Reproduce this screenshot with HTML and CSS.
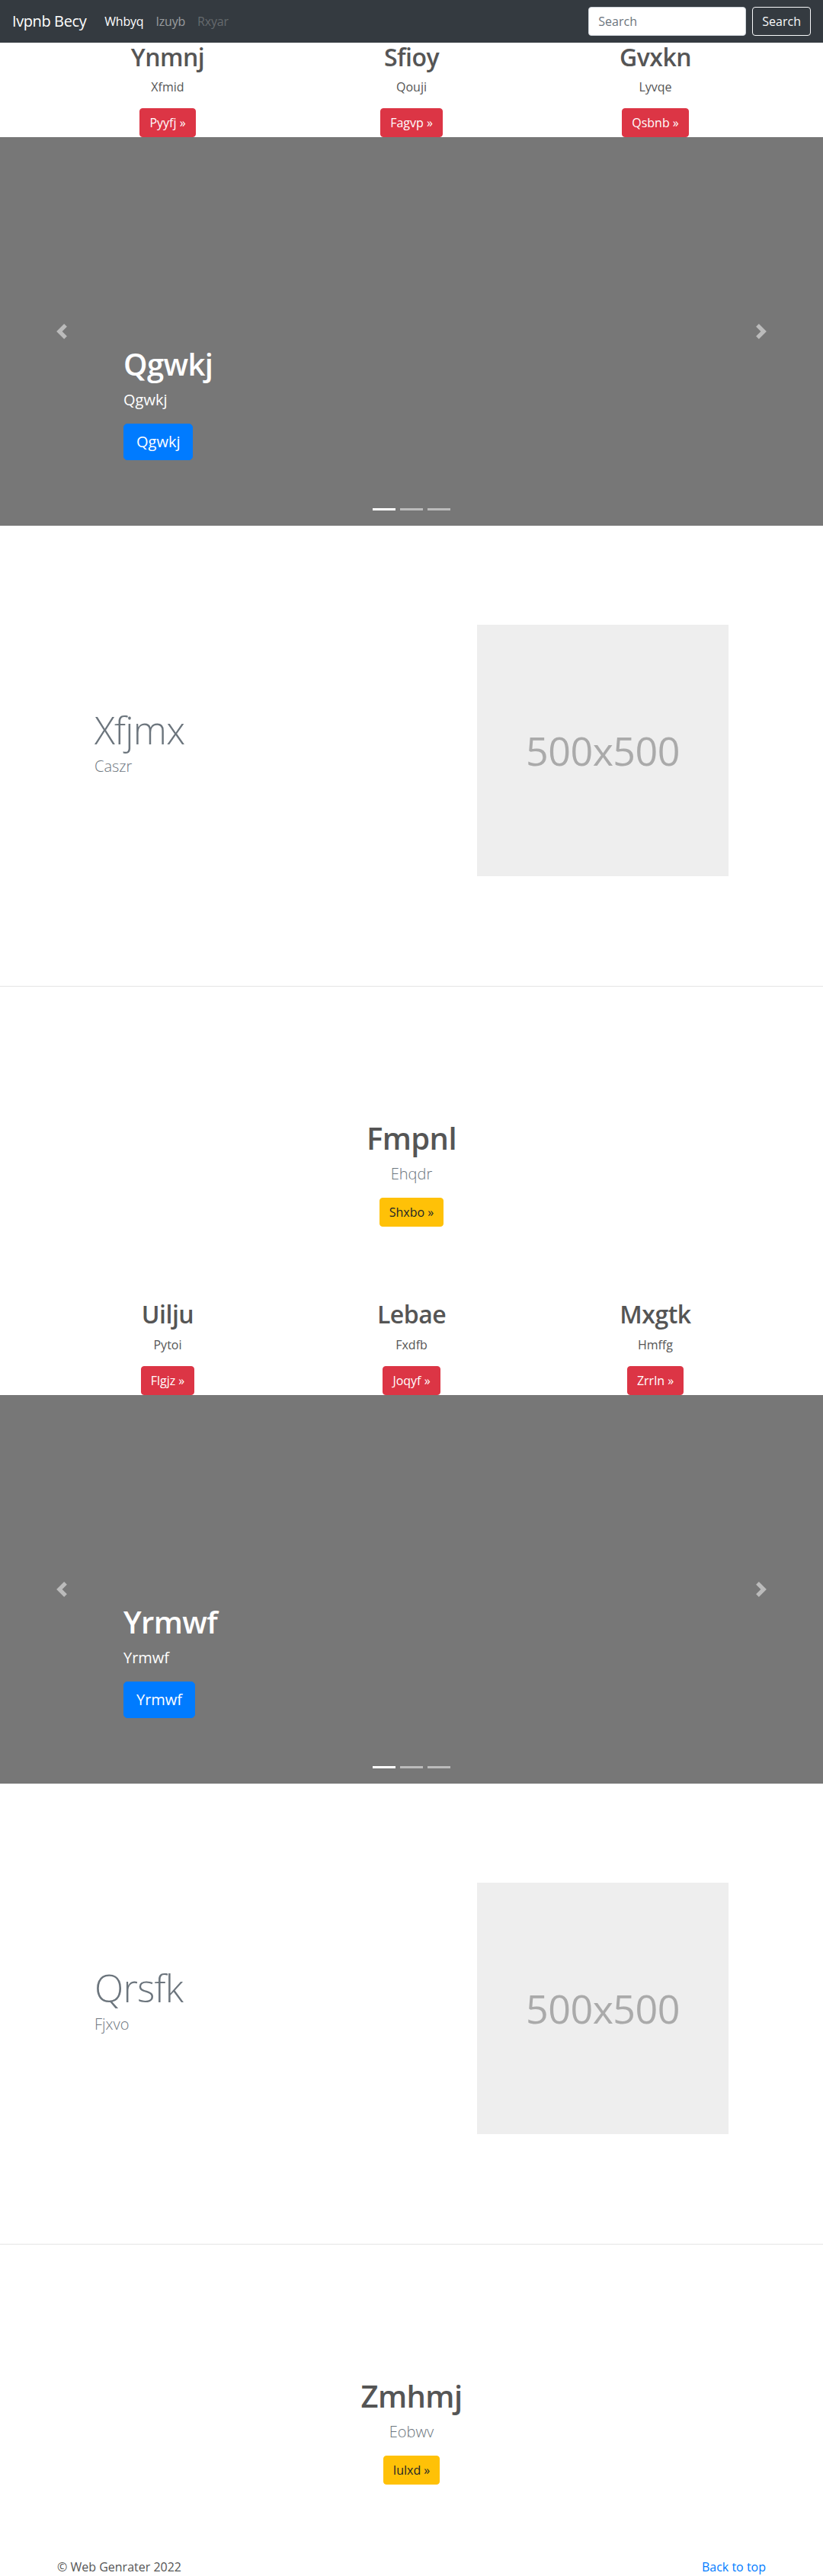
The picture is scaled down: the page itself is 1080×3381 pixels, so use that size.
FILE: index.html
```html
<!DOCTYPE html>
<html lang="en">
<head>
<meta charset="utf-8">
<title>Ivpnb Becy</title>
<link rel="stylesheet" href="styles.css">
</head>
<body>
<nav class="navbar">
  <a class="brand" href="#">Ivpnb Becy</a>
  <ul class="nav-links">
    <li><a class="nav-link active" href="#">Whbyq</a></li>
    <li><a class="nav-link" href="#">Izuyb</a></li>
    <li><a class="nav-link disabled" href="#">Rxyar</a></li>
  </ul>
  <form class="search">
    <input class="search-input" type="text" placeholder="Search">
    <button class="search-btn" type="button">Search</button>
  </form>
</nav>

<main>
  <section class="cols">
    <div class="col"><h2 class="col-title">Ynmnj</h2><p class="col-text">Xfmid</p><a class="btn btn-danger" href="#">Pyyfj &raquo;</a></div>
    <div class="col"><h2 class="col-title">Sfioy</h2><p class="col-text">Qouji</p><a class="btn btn-danger" href="#">Fagvp &raquo;</a></div>
    <div class="col"><h2 class="col-title">Gvxkn</h2><p class="col-text">Lyvqe</p><a class="btn btn-danger" href="#">Qsbnb &raquo;</a></div>
  </section>

  <section class="carousel">
    <div class="caption">
      <h1 class="caption-title">Qgwkj</h1>
      <p class="caption-text">Qgwkj</p>
      <p class="caption-action"><a class="btn btn-primary btn-lg" href="#">Qgwkj</a></p>
    </div>
    <a class="control control-prev" href="#"><svg width="20" height="20" viewBox="0 0 8 8"><path fill="#fff" d="M5.25 0l-4 4 4 4 1.5-1.5L4.25 4l2.5-2.5L5.25 0z"/></svg></a>
    <a class="control control-next" href="#"><svg width="20" height="20" viewBox="0 0 8 8"><path fill="#fff" d="M2.75 0l-1.5 1.5L3.75 4l-2.5 2.5L2.75 8l4-4-4-4z"/></svg></a>
    <ol class="indicators"><li class="active"></li><li></li><li></li></ol>
  </section>

  <section class="featurette">
    <div class="feat-text">
      <h2 class="feat-title">Xfjmx</h2>
      <p class="feat-lead">Caszr</p>
    </div>
    <div class="placeholder">500x500</div>
  </section>

  <hr class="divider">

  <section class="promo">
    <h1 class="promo-title">Fmpnl</h1>
    <p class="promo-lead">Ehqdr</p>
    <a class="btn btn-warning" href="#">Shxbo &raquo;</a>
  </section>

  <section class="cols">
    <div class="col"><h2 class="col-title">Uilju</h2><p class="col-text">Pytoi</p><a class="btn btn-danger" href="#">Flgjz &raquo;</a></div>
    <div class="col"><h2 class="col-title">Lebae</h2><p class="col-text">Fxdfb</p><a class="btn btn-danger" href="#">Joqyf &raquo;</a></div>
    <div class="col"><h2 class="col-title">Mxgtk</h2><p class="col-text">Hmffg</p><a class="btn btn-danger" href="#">Zrrln &raquo;</a></div>
  </section>

  <section class="carousel">
    <div class="caption">
      <h1 class="caption-title">Yrmwf</h1>
      <p class="caption-text">Yrmwf</p>
      <p class="caption-action"><a class="btn btn-primary btn-lg" href="#">Yrmwf</a></p>
    </div>
    <a class="control control-prev" href="#"><svg width="20" height="20" viewBox="0 0 8 8"><path fill="#fff" d="M5.25 0l-4 4 4 4 1.5-1.5L4.25 4l2.5-2.5L5.25 0z"/></svg></a>
    <a class="control control-next" href="#"><svg width="20" height="20" viewBox="0 0 8 8"><path fill="#fff" d="M2.75 0l-1.5 1.5L3.75 4l-2.5 2.5L2.75 8l4-4-4-4z"/></svg></a>
    <ol class="indicators"><li class="active"></li><li></li><li></li></ol>
  </section>

  <section class="featurette">
    <div class="feat-text">
      <h2 class="feat-title">Qrsfk</h2>
      <p class="feat-lead">Fjxvo</p>
    </div>
    <div class="placeholder">500x500</div>
  </section>

  <hr class="divider">

  <section class="promo">
    <h1 class="promo-title">Zmhmj</h1>
    <p class="promo-lead">Eobwv</p>
    <a class="btn btn-warning" href="#">Iulxd &raquo;</a>
  </section>
</main>

<footer class="footer">
  <p class="copy">&copy; Web Genrater 2022</p>
  <a class="back" href="#">Back to top</a>
</footer>
</body>
</html>
```

FILE: styles.css
```css
* { box-sizing: border-box; }

body {
  margin: 0;
  font-family: "Open Sans", "Noto Sans", sans-serif;
  font-size: 16px;
  line-height: 1.5;
  color: #555;
  background: #fff;
}

h1, h2, p { margin: 0; }
a { text-decoration: none; }

/* navbar */
.navbar {
  display: flex;
  align-items: center;
  height: 56px;
  padding: 8px 16px;
  background: #343a40;
}
.brand {
  color: #fff;
  font-size: 20px;
  line-height: 30px;
  padding: 5px 0;
  margin-right: 16px;
  letter-spacing: -0.4px;
}
.nav-links {
  display: flex;
  list-style: none;
  margin: 0;
  padding: 0;
}
.nav-link {
  display: block;
  padding: 8px;
  color: rgba(255, 255, 255, .5);
  letter-spacing: -0.2px;
}
.nav-link.active { color: #fff; }
.nav-link.disabled { color: rgba(255, 255, 255, .25); }
.search {
  margin: 0 0 0 auto;
  display: flex;
  gap: 8px;
}
.search-input {
  width: 207px;
  height: 38px;
  padding: 6px 12px;
  font: inherit;
  color: #495057;
  background: #fff;
  border: 1px solid #ced4da;
  border-radius: 4px;
}
.search-input::placeholder { color: #6c757d; }
.search-btn {
  height: 38px;
  padding: 6px 12px;
  font: inherit;
  color: #f8f9fa;
  background: transparent;
  border: 1px solid #f8f9fa;
  border-radius: 4px;
}

/* buttons */
.btn {
  display: inline-block;
  padding: 6px 12px;
  font-size: 16px;
  line-height: 24px;
  border: 1px solid transparent;
  border-radius: 4px;
}
.btn-danger { color: #fff; background: #dc3545; border-color: #dc3545; }
.btn-primary { color: #fff; background: #007bff; border-color: #007bff; }
.btn-warning { color: #212529; background: #ffc107; border-color: #ffc107; }
.btn-lg {
  padding: 8px 16px;
  font-size: 20px;
  line-height: 30px;
  border-radius: 5px;
}

/* three columns */
.cols {
  width: 960px;
  margin: 0 auto;
  display: grid;
  grid-template-columns: repeat(3, 1fr);
  text-align: center;
}
.col-title {
  font-size: 32px;
  font-weight: 600;
  line-height: 1.2;
  letter-spacing: -0.5px;
  margin-bottom: 8px;
}
.col-text { margin-bottom: 16px; }

/* carousel */
.carousel {
  position: relative;
  height: 510px;
  background: #777;
}
.caption {
  position: absolute;
  left: 15%;
  right: 15%;
  bottom: 50px;
  padding: 20px 0;
  color: #fff;
  z-index: 10;
}
.caption-title {
  font-size: 40px;
  font-weight: 600;
  line-height: 48px;
  letter-spacing: -0.6px;
  margin-bottom: 8px;
}
.caption-text {
  font-size: 20px;
  line-height: 30px;
  margin-bottom: 16px;
}
.caption-action { margin-bottom: 16px; }
.control {
  position: absolute;
  top: 0;
  bottom: 0;
  width: 15%;
  display: flex;
  align-items: center;
  justify-content: center;
  opacity: .5;
}
.control svg { display: block; }
.control-prev { left: 0; }
.control-next { right: 0; }
.indicators {
  position: absolute;
  left: 0;
  right: 0;
  bottom: 10px;
  display: flex;
  justify-content: center;
  list-style: none;
  margin: 0;
  padding: 0;
}
.indicators li {
  width: 30px;
  height: 23px;
  margin: 0 3px;
  border-top: 10px solid transparent;
  border-bottom: 10px solid transparent;
  background: #fff;
  background-clip: padding-box;
  opacity: .5;
}
.indicators li.active { opacity: 1; }

/* featurette */
.featurette {
  width: 960px;
  margin: 0 auto;
  padding: 130px 64px 144px;
  display: flex;
  align-items: center;
  justify-content: space-between;
}
.feat-title {
  font-size: 50px;
  font-weight: 300;
  line-height: 1;
  letter-spacing: -0.8px;
  color: #6c757d;
  margin-bottom: 8px;
}
.feat-lead {
  font-size: 20px;
  font-weight: 300;
  line-height: 30px;
  color: #6c757d;
  margin-bottom: 16px;
}
.placeholder {
  width: 330px;
  height: 330px;
  flex: none;
  background: #eee;
  color: #aaa;
  font-size: 52px;
  letter-spacing: -0.5px;
  display: flex;
  align-items: center;
  justify-content: center;
}

.divider {
  margin: 0;
  height: 1px;
  border: 0;
  background: #e5e5e5;
}

/* promo */
.promo {
  padding: 175px 0 96px;
  text-align: center;
}
.promo-title {
  font-size: 40px;
  font-weight: 600;
  line-height: 48px;
  letter-spacing: -0.6px;
  margin-bottom: 8px;
}
.promo-lead {
  font-size: 20px;
  font-weight: 300;
  line-height: 30px;
  color: #6c757d;
  margin-bottom: 16px;
}

/* footer */
.footer {
  width: 960px;
  margin: 0 auto;
  padding: 0 15px;
  display: flex;
  justify-content: space-between;
}
.back { color: #007bff; }
```
